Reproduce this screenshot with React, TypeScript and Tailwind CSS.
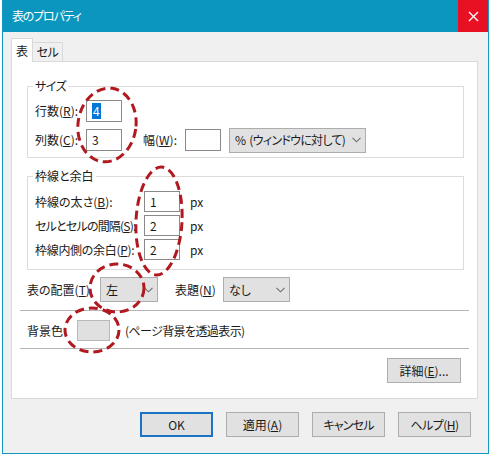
import React from 'react';

const Chevron = () => (
  <svg width="9" height="6" viewBox="0 0 9 6" className="shrink-0">
    <path d="M0.5 0.8l4 4 4-4" stroke="#6d6d6d" strokeWidth="1.1" fill="none" />
  </svg>
);

const Select = ({ text, className }: { text: React.ReactNode; className: string }) => (
  <div className={`h-[25px] bg-[#e1e1e1] border border-[#adadad] flex items-center justify-between pl-[5px] pr-[4px] shrink-0 whitespace-nowrap ${className}`}>
    <span>{text}</span>
    <Chevron />
  </div>
);

const Field = ({ children, className }: { children?: React.ReactNode; className: string }) => (
  <div className={`bg-white border border-[#8a8a8a] flex items-center pl-[5px] shrink-0 ${className}`}>{children}</div>
);

const Btn = ({ children, primary }: { children: React.ReactNode; primary?: boolean }) => (
  <div
    className={`w-[73px] h-[25px] flex items-center justify-center bg-[#e1e1e1] ${
      primary ? 'border-2 border-[#1a73c4]' : 'border border-[#adadad]'
    }`}
  >
    {children}
  </div>
);

const App = () => {
  return (
    <div className="relative w-[491px] h-[456px] bg-white overflow-hidden font-['Noto_Sans_CJK_JP','Noto_Sans',sans-serif] text-[12px] leading-[16px] text-[#1a1a1a] [font-feature-settings:'palt']">
      <div className="ml-[2px] w-[487px] h-[454px] border-x border-b border-[#1497c1] bg-[#f0f0f0] flex flex-col">
        {/* title bar */}
        <div className="h-[32px] bg-[#0a96be] flex items-center shrink-0">
          <span className="pl-[9px] text-white text-[12px] tracking-[-1.2px]">表のプロパティ</span>
          <div className="ml-auto w-[30px] h-full bg-[#e81123] flex items-center justify-center">
            <svg width="11" height="11" viewBox="0 0 11 11">
              <path d="M1 1l9 9M10 1l-9 9" stroke="#fff" strokeWidth="1.4" />
            </svg>
          </div>
        </div>

        <div className="pl-[8px] flex flex-col">
          {/* tabs */}
          <div className="mt-[6px] flex items-end">
            <div className="relative z-10 -mb-px w-[22px] h-[24px] bg-white border-x border-t border-[#d9d9d9] flex items-center justify-center">
              表
            </div>
            <div className="w-[30px] h-[19px] bg-[#f0f0f0] border-r border-t border-[#d9d9d9] flex items-center justify-center tracking-[-0.5px]">
              セル
            </div>
          </div>

          {/* panel */}
          <div className="w-[467px] h-[338px] bg-white border border-[#d9d9d9] flex flex-col pt-[16px]">
            <fieldset className="ml-[15px] w-[437px] border border-[#dcdcdc] pt-[6px] pb-[6px]">
              <legend className="ml-[5px] px-[2px] leading-[16px] tracking-[-0.5px]">サイズ</legend>
              <div className="h-[22px] flex items-center pl-[7px]">
                <span className="w-[51px]">行数(<u>R</u>):</span>
                <Field className="w-[36px] h-[22px] border-[#2a7bd0]">
                  <span className="bg-[#0078d7] text-white px-[1px]">4</span>
                </Field>
              </div>
              <div className="mt-[7px] h-[22px] flex items-center pl-[7px]">
                <span className="w-[51px]">列数(<u>C</u>):</span>
                <Field className="w-[36px] h-[22px]">3</Field>
                <span className="ml-[21px] w-[42px]">幅(<u>W</u>):</span>
                <Field className="w-[36px] h-[22px]" />
                <Select
                  text={
                    <>
                      %<span className="ml-[4px]">(ウィンドウに対して)</span>
                    </>
                  }
                  className="ml-[8px] w-[137px] tracking-[-0.7px]"
                />
              </div>
            </fieldset>

            <fieldset className="mt-[10px] ml-[15px] w-[437px] border border-[#dcdcdc] pt-[7px] pb-[9px]">
              <legend className="ml-[5px] px-[2px] leading-[16px]">枠線と余白</legend>
              {[
                ['枠線の太さ(', 'B', '):', '1', ''],
                ['セルとセルの間隔(', 'S', '):', '2', 'tracking-[-0.8px]'],
                ['枠線内側の余白(', 'P', '):', '2', 'tracking-[-0.3px]'],
              ].map(([a, k, b, v, t], i) => (
                <div key={k} className={`h-[21px] flex items-center pl-[7px] ${i > 0 ? 'mt-[3px]' : ''}`}>
                  <span className={`w-[109px] whitespace-nowrap ${t}`}>
                    {a}
                    <u>{k}</u>
                    {b}
                  </span>
                  <Field className="w-[36px] h-[21px]">{v}</Field>
                  <span className="ml-[10px]">px</span>
                </div>
              ))}
            </fieldset>

            <div className="mt-[7px] h-[25px] flex items-center pl-[15px]">
              <span className="w-[73px] whitespace-nowrap">表の配置(<u>T</u>)</span>
              <Select text="左" className="w-[58px]" />
              <span className="ml-[17px] w-[48px]">表題(<u>N</u>)</span>
              <Select text="なし" className="w-[67px]" />
            </div>

            <div className="mt-[8px] ml-[8px] w-[449px] h-px bg-[#b4b4b4]" />

            <div className="mt-[9px] h-[21px] flex items-center pl-[15px]">
              <span className="w-[50px]">背景色</span>
              <div className="w-[33px] h-[21px] bg-[#e0e0e0] border border-[#b9b9b9]" />
              <span className="ml-[15px] tracking-[-0.6px]">(ページ背景を透過表示)</span>
            </div>

            <div className="mt-[7px] ml-[8px] w-[449px] h-px bg-[#b4b4b4]" />

            <div className="mt-[9px] self-end mr-[16px] w-[74px] h-[25px] bg-[#e1e1e1] border border-[#adadad] flex items-center justify-center">
              詳細(<u>E</u>)...
            </div>
          </div>
        </div>

        {/* dialog buttons */}
        <div className="mt-[13px] flex justify-end gap-[13px] pr-[17px]">
          <Btn primary>OK</Btn>
          <Btn>
            適用(<u>A</u>)
          </Btn>
          <Btn>
            <span className="tracking-[-0.8px]">キャンセル</span>
          </Btn>
          <Btn>
            <span className="tracking-[-0.5px]">
              ヘルプ(<u>H</u>)
            </span>
          </Btn>
        </div>
      </div>

      {/* red dashed annotation rings */}
      <svg className="absolute inset-0 pointer-events-none" width="491" height="456" viewBox="0 0 491 456">
        <g fill="none" stroke="#b0191f" strokeWidth="3" strokeDasharray="9 5">
          <ellipse cx="107" cy="125" rx="29" ry="37" transform="rotate(8 107 125)" />
          <ellipse cx="159" cy="221" rx="23" ry="54" transform="rotate(3 159 221)" />
          <ellipse cx="117" cy="288" rx="27" ry="24" />
          <ellipse cx="92" cy="330" rx="27" ry="22" />
        </g>
      </svg>
    </div>
  );
};

export default App;
